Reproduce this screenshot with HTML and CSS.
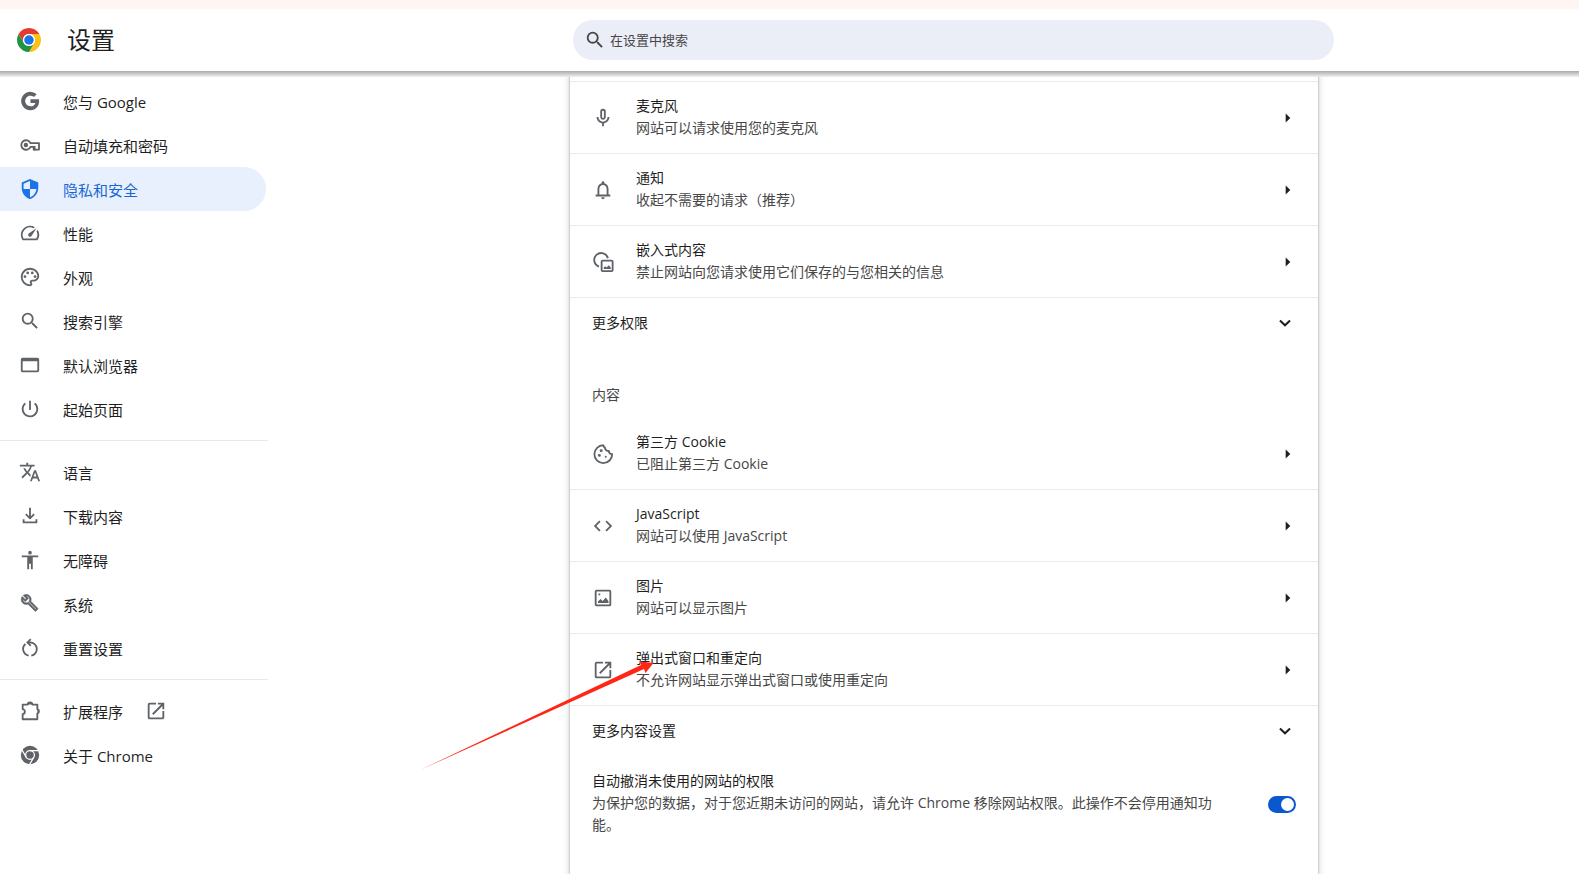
FILE: index.html
```html
<!DOCTYPE html>
<html lang="zh-CN">
<head>
<meta charset="utf-8">
<meta name="viewport" content="width=device-width, initial-scale=1">
<title>设置</title>
<link rel="stylesheet" href="styles.css">
</head>
<body>
<svg class="sprite" aria-hidden="true">
  <symbol id="i-search" viewBox="0 0 24 24"><path d="M15.5 14h-.79l-.28-.27A6.47 6.47 0 0 0 16 9.5 6.5 6.5 0 1 0 9.5 16c1.61 0 3.09-.59 4.23-1.57l.27.28v.79l5 4.99L20.49 19l-4.99-5zm-6 0a4.5 4.5 0 1 1 0-9 4.5 4.5 0 0 1 0 9z"/></symbol>
  <symbol id="i-open" viewBox="0 0 24 24"><path d="M19 19H5V5h7V3H5a2 2 0 0 0-2 2v14a2 2 0 0 0 2 2h14c1.100 0 2-.9 2-2v-7h-2v7zM14 3v2h3.590l-9.830 9.830 1.410 1.410L19 6.410V10h2V3h-7z"/></symbol>
  <symbol id="i-right" viewBox="0 0 24 24"><path d="M9.500 7v10l5-5z"/></symbol>
  <symbol id="i-down" viewBox="0 0 24 24"><path d="M6.500 9.200l5.500 5.300 5.500-5.300" fill="none" stroke="currentColor" stroke-width="2.200"/></symbol>
</svg>

<div class="strip"></div>
<header class="toolbar">
  <div class="brand">
    <svg class="logo" viewBox="0 0 48 48" aria-hidden="true">
      <circle cx="24" cy="24" r="24" fill="#fff"/>
      <path d="M3.220 12A24 24 0 0 1 44.780 12H24a12 12 0 0 0-10.390 18z" fill="#e33b2e"/>
      <path d="M44.780 12A24 24 0 0 1 24 48l10.390-18A12 12 0 0 0 24 12z" fill="#fbc116"/>
      <path d="M24 48A24 24 0 0 1 3.220 12l10.390 18a12 12 0 0 0 20.780 0z" fill="#229342"/>
      <circle cx="24" cy="24" r="12" fill="#fff"/>
      <circle cx="24" cy="24" r="9.500" fill="#1a73e8"/>
    </svg>
    <h1 class="title">设置</h1>
  </div>
  <div class="search-area">
    <label class="search">
      <svg class="icon icon-dark" aria-hidden="true"><use href="#i-search"/></svg>
      <input class="search-input" type="search" placeholder="在设置中搜索" aria-label="在设置中搜索">
    </label>
  </div>
</header>

<div class="page">
  <nav class="side">
    <a class="nav-item" href="#people"><svg class="icon" viewBox="0 0 24 24"><path d="M12.500 10.200v3.900h5.400c-.7 2.300-2.600 3.700-5.400 3.700a5.800 5.800 0 1 1 3.800-10.200l2.900-2.900A10 10 0 1 0 12.500 22c8.100 0 10-7.200 9.300-11.800z"/></svg><span>您与 Google</span></a>
    <a class="nav-item" href="#autofill"><svg class="icon" viewBox="0 0 24 24"><g fill="none" stroke="currentColor" stroke-width="2"><path d="M12.500 10A5.200 5.200 0 1 0 12.500 14h3.500v3h5.800v-7z" stroke-linejoin="round"/></g><circle cx="7.500" cy="12" r="2.400"/><path d="M16 13h2v5h-2z"/></svg><span>自动填充和密码</span></a>
    <a class="nav-item nav-active" href="#privacy" aria-current="page"><svg class="icon" viewBox="0 0 24 24"><path d="M12 1L3 5v6c0 5.550 3.840 10.740 9 12 5.160-1.260 9-6.450 9-12V5l-9-4zm0 10.990h7c-.53 4.120-3.280 7.790-7 8.940V12H5V6.300l7-3.110v8.800z"/></svg><span>隐私和安全</span></a>
    <a class="nav-item" href="#performance"><svg class="icon" viewBox="0 0 24 24"><path d="M20.380 8.570l-1.230 1.850a8 8 0 0 1-.22 7.580H5.070A8 8 0 0 1 15.580 6.850l1.850-1.230A10 10 0 0 0 3.350 19a2 2 0 0 0 1.720 1h13.850a2 2 0 0 0 1.740-1 10 10 0 0 0-.27-10.440zm-9.790 6.840a2 2 0 0 0 2.830 0l5.660-8.490-8.490 5.660a2 2 0 0 0 0 2.830z"/></svg><span>性能</span></a>
    <a class="nav-item" href="#appearance"><svg class="icon" viewBox="0 0 24 24"><path d="M12 2C6.490 2 2 6.490 2 12s4.490 10 10 10c1.380 0 2.500-1.120 2.500-2.500 0-.61-.23-1.200-.64-1.670-.08-.1-.13-.21-.13-.33 0-.28.22-.5.5-.5H16c3.310 0 6-2.690 6-6 0-4.960-4.490-9-10-9zm4 13h-1.770c-1.380 0-2.500 1.120-2.500 2.500 0 .61.22 1.190.63 1.650.06.07.14.19.14.35 0 .28-.22.5-.5.5-4.410 0-8-3.590-8-8s3.590-8 8-8 8 3.140 8 7c0 2.210-1.790 4-4 4z"/><circle cx="6.500" cy="11.500" r="1.500"/><circle cx="9.500" cy="7.500" r="1.500"/><circle cx="14.500" cy="7.500" r="1.500"/><circle cx="17.500" cy="11.500" r="1.500"/></svg><span>外观</span></a>
    <a class="nav-item" href="#engine"><svg class="icon"><use href="#i-search"/></svg><span>搜索引擎</span></a>
    <a class="nav-item" href="#browser"><svg class="icon" viewBox="0 0 24 24"><path d="M20 4H4a2 2 0 0 0-2 2v12c0 1.100.9 2 2 2h16a2 2 0 0 0 2-2V6a2 2 0 0 0-2-2zm0 14H4V8h16z"/></svg><span>默认浏览器</span></a>
    <a class="nav-item" href="#startup"><svg class="icon" viewBox="0 0 24 24"><path d="M13 3h-2v10h2V3zm4.830 2.170l-1.420 1.420A6.920 6.920 0 0 1 19 12a7 7 0 1 1-11.420-5.420L6.170 5.170A9 9 0 1 0 21 12c0-2.740-1.230-5.180-3.170-6.830z"/></svg><span>起始页面</span></a>
    <hr class="rule">
    <a class="nav-item" href="#languages"><svg class="icon" viewBox="0 0 24 24"><path d="M12.870 15.070l-2.540-2.510.03-.03A17.500 17.500 0 0 0 14.070 6H17V4h-7V2H8v2H1v1.990h11.170C11.500 7.920 10.440 9.750 9 11.350 8.070 10.320 7.300 9.190 6.690 8h-2c.73 1.630 1.730 3.170 2.980 4.560l-5.090 5.020L4 19l5-5 3.110 3.110.76-2.040zM18.500 10h-2L12 22h2l1.120-3h4.750L21 22h2l-4.500-12zm-2.620 7l1.620-4.330L19.120 17h-3.240z"/></svg><span>语言</span></a>
    <a class="nav-item" href="#downloads"><svg class="icon" viewBox="0 0 24 24"><path d="M12 3v11M7.500 10l4.500 4.500 4.500-4.500M5 15.500V19h14v-3.500" fill="none" stroke="currentColor" stroke-width="2" stroke-linejoin="round"/></svg><span>下载内容</span></a>
    <a class="nav-item" href="#a11y"><svg class="icon" viewBox="0 0 24 24"><path d="M12 2a2 2 0 1 1 0 4 2 2 0 0 1 0-4zm9 7h-6v13h-2v-6h-2v6H9V9H3V7h18v2z"/></svg><span>无障碍</span></a>
    <a class="nav-item" href="#system"><svg class="icon" viewBox="-2 -1 29 29"><path d="M22.610 18.990l-9.080-9.080c.93-2.340.45-5.100-1.440-7C9.790.61 6.210.4 3.660 2.260L7.500 6.110 6.080 7.520 2.250 3.690C.39 6.230.6 9.820 2.900 12.110c1.860 1.860 4.570 2.350 6.890 1.480l9.110 9.110c.39.39 1.020.39 1.410 0l2.300-2.300c.4-.38.4-1.010 0-1.410zm-3 1.600l-9.460-9.460c-.61.45-1.290.72-2 .82-1.360.2-2.790-.21-3.830-1.250C3.370 9.760 2.930 8.500 3 7.260l3.090 3.090 4.240-4.240-3.090-3.090c1.240-.07 2.490.37 3.440 1.310 1.080 1.080 1.490 2.570 1.240 3.960-.12.71-.42 1.370-.88 1.960l9.450 9.450-.88.89z" stroke="currentColor" stroke-width=".9"/></svg><span>系统</span></a>
    <a class="nav-item" href="#reset"><svg class="icon" viewBox="0 0 24 24"><path d="M10.600 20.300A7.300 7.300 0 0 1 7 7.600M9.500 6H12A7.200 7.200 0 0 1 13.400 20.300" fill="none" stroke="currentColor" stroke-width="2"/><path d="M12.200 1.600l1.300 1.300L10.600 6l2.900 3-1.300 1.300L7.800 6z"/></svg><span>重置设置</span></a>
    <hr class="rule">
    <a class="nav-item" href="#extensions"><svg class="icon" viewBox="0 0 24 24"><path d="M4 5h5.500a2.500 2.500 0 0 1 5 0H20v5a2.500 2.500 0 0 1 0 4.800V21H4v-5.500c3.200-.8 3.200-4.700 0-5.500z" fill="none" stroke="currentColor" stroke-width="2" stroke-linejoin="round"/><path d="M9.500 5a2.500 2.500 0 0 1 5 0zM20 10a2.500 2.500 0 0 1 0 4.800z"/></svg><span>扩展程序</span><svg class="icon"><use href="#i-open"/></svg></a>
    <a class="nav-item" href="#about"><svg class="icon" viewBox="0 0 24 24"><circle cx="12" cy="12" r="10"/><g fill="none" stroke="#fff" stroke-width="1.400"><circle cx="12" cy="12" r="4.800"/><path d="M12 7.200h9.500M7.840 14.400L3.100 6.200M16.160 14.400L11.400 22.600"/></g></svg><span>关于 Chrome</span></a>
  </nav>

  <main class="main">
    <section class="card">
      <div class="card-lead"></div>
      <button class="row" type="button">
        <svg class="icon" viewBox="0 0 24 24"><path d="M12 14c1.660 0 3-1.340 3-3V5a3 3 0 0 0-6 0v6c0 1.660 1.340 3 3 3zm-1-9a1 1 0 0 1 2 0v6a1 1 0 0 1-2 0V5zm6 6a5 5 0 0 1-10 0H5c0 3.530 2.610 6.430 6 6.920V21h2v-3.080c3.390-.49 6-3.390 6-6.920h-2z"/></svg>
        <span class="text"><span class="label">麦克风</span><span class="sub">网站可以请求使用您的麦克风</span></span>
        <svg class="icon arrow"><use href="#i-right"/></svg>
      </button>
      <button class="row" type="button">
        <svg class="icon" viewBox="0 0 24 24"><path d="M12 22a2 2 0 0 0 2-2h-4c0 1.100.9 2 2 2zm6-5v-6c0-3.070-1.630-5.640-4.500-6.320V4a1.500 1.500 0 0 0-3 0v.68C7.640 5.360 6 7.920 6 11v6H4v2h16v-2h-2zm-2 0H8v-6c0-2.480 1.510-4.500 4-4.500s4 2.020 4 4.500v6z"/></svg>
        <span class="text"><span class="label">通知</span><span class="sub">收起不需要的请求（推荐）</span></span>
        <svg class="icon arrow"><use href="#i-right"/></svg>
      </button>
      <button class="row" type="button">
        <svg class="icon" viewBox="0 0 24 24"><g fill="none" stroke="currentColor" stroke-width="2"><path d="M7.600 17A7.600 7.600 0 1 1 17.400 8"/><rect x="10.500" y="10.500" width="12" height="11.500" rx="1"/></g><path d="M12.800 19.500v-1.500l1.500-1.500 1.500 1.500 2.500-2.500 2.200 2.500v1.500z"/></svg>
        <span class="text"><span class="label">嵌入式内容</span><span class="sub">禁止网站向您请求使用它们保存的与您相关的信息</span></span>
        <svg class="icon arrow"><use href="#i-right"/></svg>
      </button>
      <button class="row row-more" type="button" aria-expanded="false">
        <span class="more-text">更多权限</span>
        <svg class="icon chevron"><use href="#i-down"/></svg>
      </button>

      <h2 class="group">内容</h2>
      <button class="row row-first" type="button">
        <svg class="icon" viewBox="0 0 24 24"><path d="M12.500 2.500A9.700 9.700 0 1 0 22 12.200a3.600 3.600 0 0 1-3.600-3.500 3.800 3.800 0 0 1-4.200-3.400 3.600 3.600 0 0 1-1.700-2.800z" fill="none" stroke="currentColor" stroke-width="2" stroke-linejoin="round"/><circle cx="10" cy="8.500" r="1.600"/><circle cx="8" cy="13.500" r="1.600"/><circle cx="15" cy="15" r="1.100"/></svg>
        <span class="text"><span class="label">第三方 Cookie</span><span class="sub">已阻止第三方 Cookie</span></span>
        <svg class="icon arrow"><use href="#i-right"/></svg>
      </button>
      <button class="row" type="button">
        <svg class="icon" viewBox="0 0 24 24"><path d="M9.400 16.600L4.800 12l4.600-4.600L8 6l-6 6 6 6 1.400-1.400zm5.200 0l4.600-4.600-4.600-4.600L16 6l6 6-6 6-1.400-1.400z"/></svg>
        <span class="text"><span class="label">JavaScript</span><span class="sub">网站可以使用 JavaScript</span></span>
        <svg class="icon arrow"><use href="#i-right"/></svg>
      </button>
      <button class="row" type="button">
        <svg class="icon" viewBox="0 0 24 24"><path d="M19 5v14H5V5h14m0-2H5a2 2 0 0 0-2 2v14c0 1.100.9 2 2 2h14a2 2 0 0 0 2-2V5a2 2 0 0 0-2-2z"/><path d="M6.500 17.500v-1.800l2.800-2.700 2.400 2.400 3.400-4 2.900 4.200v1.900zM7 7h2v2H7z"/></svg>
        <span class="text"><span class="label">图片</span><span class="sub">网站可以显示图片</span></span>
        <svg class="icon arrow"><use href="#i-right"/></svg>
      </button>
      <button class="row" type="button">
        <svg class="icon"><use href="#i-open"/></svg>
        <span class="text"><span class="label">弹出式窗口和重定向</span><span class="sub">不允许网站显示弹出式窗口或使用重定向</span></span>
        <svg class="icon arrow"><use href="#i-right"/></svg>
        <svg class="pointer" viewBox="0 0 234 110" aria-hidden="true"><path d="M0 109L221 4l-1-3.500 13.500 1.500-8 10-1.500-4z"/></svg>
      </button>
      <button class="row row-more" type="button" aria-expanded="false">
        <span class="more-text">更多内容设置</span>
        <svg class="icon chevron"><use href="#i-down"/></svg>
      </button>
      <label class="toggle-row">
        <span class="text"><span class="label">自动撤消未使用的网站的权限</span><span class="sub">为保护您的数据，对于您近期未访问的网站，请允许 Chrome 移除网站权限。此操作不会停用通知功能。</span></span>
        <input class="toggle" type="checkbox" role="switch" checked>
      </label>
    </section>
  </main>
</div>
</body>
</html>
```
FILE: styles.css
```css
* {
  box-sizing: border-box;
}

body {
  margin: 0;
  height: 100vh;
  overflow: hidden;
  display: flex;
  flex-direction: column;
  background: #fff;
  color: #1f1f1f;
  font-family: "Open Sans", "Noto Sans CJK SC", sans-serif;
  font-size: 14px;
  line-height: 22px;
}

.sprite {
  display: none;
}

.strip {
  flex: none;
  height: 9px;
  background: #fff5f2;
}

.toolbar {
  position: relative;
  z-index: 1;
  flex: none;
  display: flex;
  align-items: center;
  padding: 11px 0;
  background: #fff;
}

.toolbar::after {
  content: "";
  position: absolute;
  top: 100%;
  left: 0;
  right: 0;
  height: 6px;
  background: linear-gradient(#a9aca9, #f0f0f0);
}

.brand {
  flex: none;
  width: 328px;
  display: flex;
  align-items: center;
  gap: 26px;
  padding-left: 17px;
}

.logo {
  width: 24px;
  height: 24px;
}

.title {
  margin: 0;
  font-size: 24px;
  font-weight: 400;
  line-height: 32px;
}

.search-area {
  flex: 1;
  display: flex;
  justify-content: center;
}

.search {
  width: 100%;
  max-width: 761px;
  height: 40px;
  display: flex;
  align-items: center;
  gap: 4px;
  padding: 0 11px;
  border-radius: 20px;
  background: #ebeef7;
}

.search-input {
  flex: 1;
  min-width: 0;
  padding: 0;
  border: 0;
  outline: 0;
  background: none;
  color: #1f1f1f;
  font: inherit;
  font-size: 13px;
}

.search-input::placeholder {
  color: #474747;
  opacity: 1;
}

.icon {
  flex: none;
  width: 22px;
  height: 22px;
  color: #5f6368;
  fill: currentColor;
}

.icon-dark {
  color: #474747;
}

.page {
  flex: 1;
  min-height: 0;
  display: flex;
}

.side {
  flex: none;
  width: 268px;
  padding-top: 8px;
}

.nav-item {
  display: flex;
  align-items: center;
  gap: 22px;
  height: 44px;
  margin-right: 2px;
  padding-left: 19px;
  border-radius: 0 22px 22px 0;
  color: #1f1f1f;
  font-size: 15px;
  text-decoration: none;
}

.nav-item span {
  padding-top: 2px;
}

.nav-active {
  background: #e8f0fe;
  color: #1967d2;
}

.nav-active .icon {
  color: #1a73e8;
}

.rule {
  height: 1px;
  margin: 9px 0;
  border: 0;
  background: #e8e8e8;
}

.main {
  flex: 1;
  min-width: 0;
  display: flex;
  justify-content: center;
  padding-left: 41px;
}

.card {
  width: 100%;
  max-width: 748px;
  background: #fff;
  box-shadow: 0 0 2px rgba(60, 64, 67, 0.5), 0 2px 6px 2px rgba(60, 64, 67, 0.15);
}

.card-lead {
  height: 10px;
}

.row {
  position: relative;
  width: 100%;
  display: flex;
  align-items: center;
  gap: 22px;
  padding: 13px 22px 12px;
  border: 0;
  border-top: 1px solid #ebebeb;
  background: none;
  color: inherit;
  font: inherit;
  text-align: left;
}

.row-first {
  border-top-color: transparent;
}

.row-more {
  justify-content: space-between;
  padding: 14px 22px;
}

.text {
  flex: 1;
  min-width: 0;
  display: flex;
  flex-direction: column;
  padding-bottom: 2px;
}

.label {
  color: #1f1f1f;
}

.sub {
  color: #474747;
}

.arrow {
  margin-right: -3px;
  color: #1f1f1f;
}

.chevron {
  color: #1f1f1f;
}

.group {
  margin: 0;
  padding: 36px 22px 11px;
  color: #474747;
  font-size: 14px;
  font-weight: 400;
}

.pointer {
  position: absolute;
  left: -150px;
  top: 27px;
  width: 234px;
  height: 110px;
  fill: #ff2617;
  pointer-events: none;
}

.toggle-row {
  display: flex;
  align-items: center;
  gap: 52px;
  padding: 14px 22px;
}

.toggle {
  appearance: none;
  flex: none;
  display: flex;
  align-items: center;
  justify-content: flex-end;
  width: 28px;
  height: 17px;
  margin: 0;
  padding: 2px;
  border-radius: 9px;
  background: #0b57d0;
}

.toggle::before {
  content: "";
  width: 13px;
  height: 13px;
  border-radius: 50%;
  background: #fff;
}
```
